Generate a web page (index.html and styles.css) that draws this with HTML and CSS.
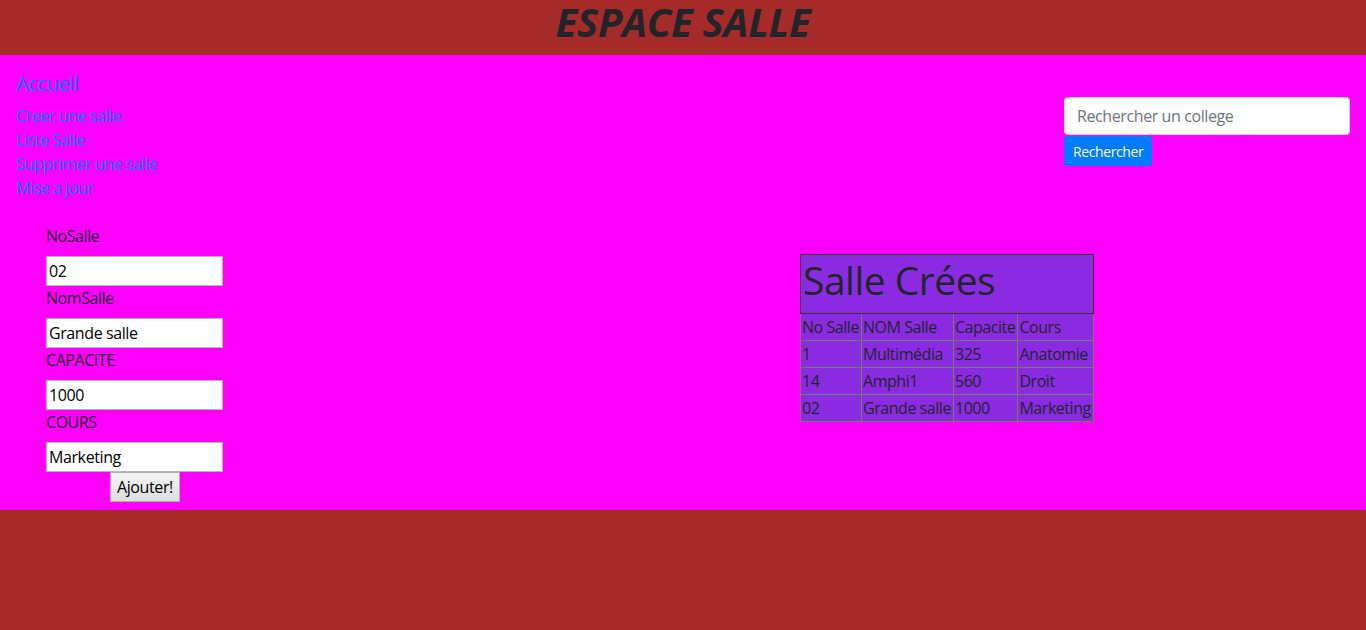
FILE: index.html
```html
<!DOCTYPE html>
<html lang="fr">
<head>
<meta charset="utf-8">
<title>Espace Salle</title>
<link rel="stylesheet" href="styles.css">
</head>
<body>
<header class="top">
  <h1 class="title">ESPACE SALLE</h1>
</header>
<main class="main">
  <div class="toprow">
    <nav class="nav">
      <a class="brand" href="#">Accueil</a>
      <a class="link" href="#">Creer une salle</a>
      <a class="link" href="#">Liste Salle</a>
      <a class="link" href="#">Supprimer une salle</a>
      <a class="link" href="#">Mise a jour</a>
    </nav>
    <form class="search">
      <input class="search-input" type="text" placeholder="Rechercher un college">
      <button class="search-btn" type="button">Rechercher</button>
    </form>
  </div>
  <div class="content">
    <form class="salle-form">
      <label class="lbl">NoSalle</label>
      <input class="fld" type="text" value="02">
      <label class="lbl">NomSalle</label>
      <input class="fld" type="text" value="Grande salle">
      <label class="lbl">CAPACITE</label>
      <input class="fld" type="text" value="1000">
      <label class="lbl">COURS</label>
      <input class="fld" type="text" value="Marketing">
      <button class="add" type="button">Ajouter!</button>
    </form>
    <div class="table-wrap">
      <table class="tbl">
        <tr><th class="tbl-title" colspan="4"><h1 class="tbl-h">Salle Crées</h1></th></tr>
        <tr><td>No Salle</td><td>NOM Salle</td><td>Capacite</td><td>Cours</td></tr>
        <tr><td>1</td><td>Multimédia</td><td>325</td><td>Anatomie</td></tr>
        <tr><td>14</td><td>Amphi1</td><td>560</td><td>Droit</td></tr>
        <tr><td>02</td><td>Grande salle</td><td>1000</td><td>Marketing</td></tr>
      </table>
    </div>
  </div>
</main>
</body>
</html>
```

FILE: styles.css
```css
* { box-sizing: border-box; }
html, body { margin: 0; padding: 0; }
body {
  background: #a52a2a;
  font-family: "Open Sans", "Noto Sans", sans-serif;
  font-size: 16px;
  line-height: 24px;
  letter-spacing: -0.45px;
  color: #212529;
}
.top {
  height: 55px;
  display: flex;
  align-items: flex-start;
  justify-content: center;
}
.title {
  margin: 0;
  font-size: 40px;
  line-height: 44px;
  font-style: italic;
  font-weight: 700;
  letter-spacing: -0.3px;
  color: #212529;
}
.main {
  background: #ff00ff;
  padding: 16px 16px 8px 16px;
}
.toprow {
  display: flex;
  justify-content: space-between;
  align-items: flex-start;
}
.nav {
  display: flex;
  flex-direction: column;
}
.brand {
  font-size: 20px;
  line-height: 26px;
  margin-bottom: 7px;
  color: #007bff;
  text-decoration: none;
}
.link {
  color: #007bff;
  text-decoration: none;
  line-height: 24px;
}
.search {
  margin-top: 26px;
  width: 286px;
  display: flex;
  flex-direction: column;
  align-items: flex-start;
}
.search-input {
  width: 286px;
  height: 38px;
  padding: 6px 12px;
  font-family: inherit;
  font-size: 16px;
  letter-spacing: -0.4px;
  color: #495057;
  background: #fff;
  border: 1px solid #ced4da;
  border-radius: 4px;
  outline: none;
}
.search-input::placeholder { color: #6c757d; }
.search-btn {
  margin-top: 1px;
  height: 30px;
  padding: 0 8px;
  font-family: inherit;
  font-size: 14px;
  letter-spacing: -0.4px;
  color: #fff;
  background: #007bff;
  border: 1px solid #007bff;
  border-radius: 3px;
}
.content {
  display: grid;
  grid-template-columns: 1fr 1fr;
  margin-top: 24px;
}
.salle-form {
  margin-left: 30px;
  display: flex;
  flex-direction: column;
  align-items: flex-start;
}
.lbl {
  display: block;
  line-height: 24px;
  margin-bottom: 8px;
}
.fld {
  width: 177px;
  height: 30px;
  padding: 1px 2px;
  font-family: inherit;
  font-size: 16px;
  letter-spacing: -0.4px;
  color: #000;
  background: #fff;
  border: 1px solid #b4b4b4;
  outline: none;
}
.add {
  margin-left: 64px;
  height: 30px;
  padding: 0 6px;
  font-family: inherit;
  font-size: 16px;
  letter-spacing: -0.4px;
  color: #000;
  background: linear-gradient(#f4f4f4, #dedede);
  border: 1px solid #adadad;
}
.table-wrap {
  padding-left: 117px;
  padding-top: 30px;
}
.tbl {
  border-collapse: collapse;
  background: #8a2be2;
  border: 1px solid #333;
}
.tbl td {
  border: 1px solid #718060;
  padding: 1px 2px 1px 1px;
  line-height: 24px;
  white-space: nowrap;
}
.tbl-title {
  border: 1px solid #333;
  text-align: left;
  padding: 1px 2px;
  font-weight: normal;
}
.tbl-h {
  margin: 0 0 8px 0;
  font-size: 39px;
  line-height: 48px;
  font-weight: 500;
  letter-spacing: -0.5px;
}
```
